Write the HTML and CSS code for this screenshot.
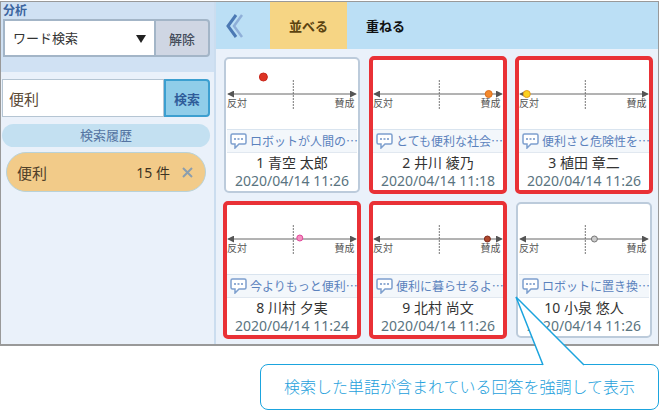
FILE: index.html
```html
<!DOCTYPE html>
<html lang="ja">
<head>
    <meta charset="UTF-8">
    <meta name="viewport" content="width=device-width, initial-scale=1.0">
    <title>ワード検索</title>
    <link rel="stylesheet" href="styles.css">
</head>
<body>

<!-- shared shapes -->
<svg class="defs" width="0" height="0" aria-hidden="true">
    <defs>
        <marker id="arrow" viewBox="0 0 6 6" refX="5" refY="3" markerWidth="7" markerHeight="7" markerUnits="userSpaceOnUse" orient="auto-start-reverse">
            <path d="M0 0L6 3L0 6Z" fill="#555"/>
        </marker>
        <symbol id="bubble" viewBox="0 0 17 16">
            <path d="M2.5 1H14.5Q16 1 16 2.500V9.500Q16 11 14.500 11H9L5 15V11H2.500Q1 11 1 9.500V2.500Q1 1 2.500 1Z" fill="#fff" stroke="#7d9fce" stroke-width="1.500"/>
            <path d="M4 6H6M7.500 6H9.500M11 6H13" stroke="#6f93c6" stroke-width="1.500"/>
        </symbol>
    </defs>
</svg>

<div class="app">
    <aside class="sidebar">
        <div class="analysis">
            <label class="analysis-title" for="mode">分析</label>
            <div class="row">
                <div class="select-wrap">
                    <select class="select" id="mode">
                        <option>ワード検索</option>
                    </select>
                    <span class="select-arrow"></span>
                </div>
                <button class="btn-clear" type="button">解除</button>
            </div>
        </div>
        <div class="search">
            <div class="row">
                <input class="search-box" type="text" value="便利" aria-label="検索">
                <button class="btn-search" type="button">検索</button>
            </div>
            <div class="history-title">検索履歴</div>
            <div class="history-item">
                <span class="history-word">便利</span>
                <span class="history-count">15 件</span>
                <button class="history-close" type="button" aria-label="削除">
                    <svg width="11" height="11" viewBox="0 0 11 11"><path d="M1 1L10 10M10 1L1 10" stroke="#8b9eae" stroke-width="2"/></svg>
                </button>
            </div>
        </div>
    </aside>

    <main class="main">
        <div class="toolbar">
            <button class="back" type="button" aria-label="戻る">
                <svg width="18" height="24" viewBox="0 0 18 24" fill="none">
                    <path d="M16 1L8 12L16 23" stroke="#8fafd8" stroke-width="2.500"/>
                    <path d="M10 1L2 12L10 23" stroke="#4b79b4" stroke-width="3"/>
                </svg>
            </button>
            <button class="tab active" type="button">並べる</button>
            <button class="tab" type="button">重ねる</button>
        </div>

        <div class="cards">
            <div class="card">
                <svg class="chart">
                    <line class="middle" x1="51%" y1="20" x2="51%" y2="49"/>
                    <line class="axis" x1="1%" y1="34" x2="99%" y2="34"/>
                    <text x="0" y="47">反対</text>
                    <text class="end" x="98%" y="47">賛成</text>
                    <circle cx="28%" cy="17" r="4" fill="#dd3424" stroke="#c9281d"/>
                </svg>
                <div class="comment"><svg class="icon"><use href="#bubble"/></svg><span>ロボットが人間の…</span></div>
                <div class="name">1 青空 太郎</div>
                <div class="date">2020/04/14 11:26</div>
            </div>
            <div class="card hit">
                <svg class="chart">
                    <line class="middle" x1="51%" y1="20" x2="51%" y2="49"/>
                    <line class="axis" x1="1%" y1="34" x2="99%" y2="34"/>
                    <text x="0" y="47">反対</text>
                    <text class="end" x="98%" y="47">賛成</text>
                    <circle cx="89%" cy="34" r="3.500" fill="#f58a2c" stroke="#dd6f1c"/>
                </svg>
                <div class="comment"><svg class="icon"><use href="#bubble"/></svg><span>とても便利な社会…</span></div>
                <div class="name">2 井川 綾乃</div>
                <div class="date">2020/04/14 11:18</div>
            </div>
            <div class="card hit">
                <svg class="chart">
                    <line class="middle" x1="51%" y1="20" x2="51%" y2="49"/>
                    <line class="axis" x1="1%" y1="34" x2="99%" y2="34"/>
                    <text x="0" y="47">反対</text>
                    <text class="end" x="98%" y="47">賛成</text>
                    <circle cx="6%" cy="34" r="3.500" fill="#fbd21e" stroke="#e39a1f"/>
                </svg>
                <div class="comment"><svg class="icon"><use href="#bubble"/></svg><span>便利さと危険性を…</span></div>
                <div class="name">3 植田 章二</div>
                <div class="date">2020/04/14 11:26</div>
            </div>
            <div class="card hit">
                <svg class="chart">
                    <line class="middle" x1="51%" y1="20" x2="51%" y2="49"/>
                    <line class="axis" x1="1%" y1="34" x2="99%" y2="34"/>
                    <text x="0" y="47">反対</text>
                    <text class="end" x="98%" y="47">賛成</text>
                    <circle cx="56%" cy="33" r="3" fill="#f58fc0" stroke="#e0489a"/>
                </svg>
                <div class="comment"><svg class="icon"><use href="#bubble"/></svg><span>今よりもっと便利…</span></div>
                <div class="name">8 川村 夕実</div>
                <div class="date">2020/04/14 11:24</div>
            </div>
            <div class="card hit">
                <svg class="chart">
                    <line class="middle" x1="51%" y1="20" x2="51%" y2="49"/>
                    <line class="axis" x1="1%" y1="34" x2="99%" y2="34"/>
                    <text x="0" y="47">反対</text>
                    <text class="end" x="98%" y="47">賛成</text>
                    <circle cx="88%" cy="34" r="3" fill="#b0482c" stroke="#7e2a1c"/>
                </svg>
                <div class="comment"><svg class="icon"><use href="#bubble"/></svg><span>便利に暮らせるよ…</span></div>
                <div class="name">9 北村 尚文</div>
                <div class="date">2020/04/14 11:26</div>
            </div>
            <div class="card">
                <svg class="chart">
                    <line class="middle" x1="51%" y1="20" x2="51%" y2="49"/>
                    <line class="axis" x1="1%" y1="34" x2="99%" y2="34"/>
                    <text x="0" y="47">反対</text>
                    <text class="end" x="98%" y="47">賛成</text>
                    <circle cx="58%" cy="34" r="3" fill="#ccc" stroke="#777"/>
                </svg>
                <div class="comment"><svg class="icon"><use href="#bubble"/></svg><span>ロボットに置き換…</span></div>
                <div class="name">10 小泉 悠人</div>
                <div class="date">2020/04/14 11:26</div>
            </div>
        </div>
    </main>
</div>

<div class="callout">
    <svg class="callout-tail" width="70" height="70" viewBox="0 0 70 70">
        <path d="M28 70V68.500L1 1L69 68.500V70Z" fill="#fff"/>
        <path d="M28 69L1 1L69 69" fill="none" stroke="#1ba4de" stroke-width="1.500"/>
    </svg>
    検索した単語が含まれている回答を強調して表示
</div>

</body>
</html>
```
FILE: styles.css
```css
* {
    box-sizing: border-box;
}
body {
    margin: 0;
    padding: 1px 1px 0 0;
    background: #fff;
    color: #333;
    font-family: "Noto Sans", "Noto Sans CJK JP", sans-serif;
    font-size: 14px;
}
button, input, select {
    font-family: inherit;
    margin: 0;
    padding: 0;
}
button {
    cursor: pointer;
}
.defs {
    position: absolute;
}
.app {
    display: flex;
    border: 1px solid #999;
    border-bottom-width: 2px;
}

/* left side */
.sidebar {
    width: 215px;
    flex-shrink: 0;
    background: #eaf1fa;
    border-right: 2px solid #cbddef;
}
.row {
    display: flex;
}
.analysis {
    height: 70px;
    padding: 1px 4px 0 2px;
    background: #d0e1f3;
}
.analysis-title {
    display: block;
    color: #3c659f;
    font-size: 12px;
    font-weight: bold;
    line-height: 16px;
}
.select-wrap {
    position: relative;
    flex: 1;
}
.select {
    appearance: none;
    width: 100%;
    height: 38px;
    padding-left: 8px;
    border: 2px solid #a3b5c7;
    border-radius: 0;
    background: #fff;
    color: #333;
    font-size: 13px;
}
.select-arrow {
    position: absolute;
    top: 16px;
    right: 10px;
    border: 5px solid transparent;
    border-top: 8px solid #222;
    border-bottom: 0;
    pointer-events: none;
}
.btn-clear {
    width: 54px;
    height: 38px;
    border: 2px solid #a3b5c7;
    border-left: 0;
    border-radius: 0 4px 4px 0;
    background: #cfd6e3;
    color: #444c5a;
    font-size: 13px;
    font-weight: 500;
}
.search {
    padding: 7px 4px 0 1px;
}
.search-box {
    flex: 1;
    min-width: 0;
    height: 38px;
    padding-left: 6px;
    border: 1px solid #b5c5d3;
    background: #fff;
    color: #5a4a36;
    font-size: 15px;
}
.btn-search {
    width: 46px;
    height: 38px;
    border: 2px solid #3c9fd0;
    border-radius: 0 4px 4px 0;
    background: #90cde9;
    color: #2f5c99;
    font-size: 13px;
    font-weight: bold;
}
.history-title {
    margin-top: 7px;
    border-radius: 12px;
    background: #c3e0f1;
    color: #5474a2;
    font-size: 13px;
    line-height: 23px;
    text-align: center;
}
.history-item {
    display: flex;
    align-items: center;
    height: 40px;
    margin: 5px 4px 0;
    padding: 0 12px 0 10px;
    border: 1px solid #b9d2d8;
    border-radius: 20px;
    background: #f2cb89;
}
.history-word {
    flex: 1;
    color: #4f4029;
    font-size: 15px;
}
.history-count {
    color: #3d3323;
}
.history-close {
    display: flex;
    margin-left: 12px;
    border: 0;
    background: none;
}

/* right side */
.main {
    flex: 1;
    min-width: 0;
    background: #eaf1fa;
}
.toolbar {
    display: flex;
    height: 47px;
    background: #bbdff5;
}
.back {
    width: 54px;
    padding: 0 0 0 10px;
    border: 0;
    background: none;
    text-align: left;
}
.back svg {
    display: block;
}
.tab {
    width: 77px;
    border: 0;
    background: none;
    color: #111;
    font-size: 13px;
    font-weight: bold;
}
.tab.active {
    background: #f6d584;
    color: #5b4310;
}
.cards {
    display: grid;
    grid-template-columns: repeat(3, 1fr);
    gap: 7px 8px;
    padding: 7px 5px 5px 7px;
}
.card {
    min-width: 0;
    margin: 1px;
    padding: 1px;
    border: 2px solid #bccbdb;
    border-radius: 5px;
    background: #fff;
    text-align: center;
}
.card.hit {
    margin: 0;
    padding: 0;
    border: 4px solid #e93136;
}
.chart {
    display: block;
    width: 100%;
    height: 69px;
}
.chart text {
    fill: #555;
    font-size: 10px;
}
.chart .end {
    text-anchor: end;
}
.axis {
    stroke: #666;
    marker-start: url(#arrow);
    marker-end: url(#arrow);
}
.middle {
    stroke: #777;
    stroke-dasharray: 2 1;
}
.comment {
    display: flex;
    align-items: center;
    gap: 3px;
    height: 24px;
    padding-left: 3px;
    border-top: 1px solid #d9e4ef;
    border-bottom: 1px solid #e1e8f0;
    background: #f3f7fb;
    color: #5b82bd;
    font-family: "Noto Sans CJK JP", sans-serif;
    font-size: 12px;
    line-height: 22px;
    white-space: nowrap;
}
.icon {
    width: 17px;
    height: 16px;
    flex-shrink: 0;
}
.name {
    line-height: 19px;
}
.date {
    color: #5a7480;
    line-height: 18px;
}

/* note under the window */
.callout {
    position: relative;
    width: 399px;
    max-width: 100%;
    margin: 18px 0 0 auto;
    border: 1px solid #1ba4de;
    border-radius: 8px;
    background: #fff;
    color: #1e9fdc;
    font-size: 16px;
    font-weight: 300;
    line-height: 44px;
    text-align: center;
}
.callout-tail {
    position: absolute;
    bottom: 100%;
    left: 254px;
    margin-bottom: -1px;
}
```
